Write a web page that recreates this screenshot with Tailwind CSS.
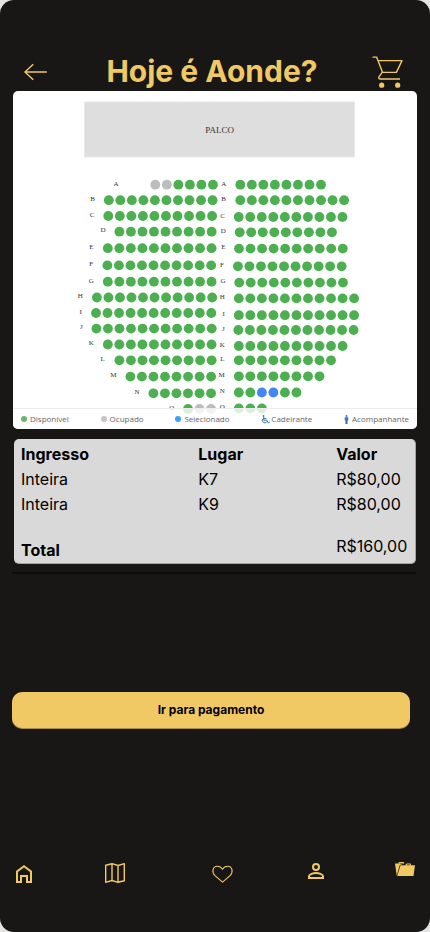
<!DOCTYPE html>
<html lang="pt-BR">
<head>
<meta charset="utf-8">
<meta name="viewport" content="width=device-width, initial-scale=1">
<title>Hoje é Aonde?</title>
<script src="https://cdn.jsdelivr.net/npm/@tailwindcss/browser@4"></script>
</head>
<body class="bg-[#e4e4e4] font-['Inter',sans-serif]">
<div class="flex min-h-screen flex-col rounded-[14px] bg-[#181715] text-[#f0c964]">

  <header class="flex items-center justify-between pt-[52px] pr-[26px] pl-6">
    <a href="#" aria-label="Voltar" class="block w-7">
      <svg class="h-[18px] w-6" viewBox="0 0 24 18" fill="none" stroke="currentColor" stroke-width="1.4"><path d="M22.8 9H1M9.2 1.2 1 9l8.2 7.8"/></svg>
    </a>
    <h1 class="text-[30px] leading-[39px] font-bold">Hoje é Aonde?</h1>
    <a href="#" aria-label="Carrinho" class="block">
      <svg class="h-8 w-8" viewBox="0 0 32 32" fill="none" stroke="currentColor" stroke-width="1.4" stroke-linejoin="round"><path d="M.5 1.1h4.1L10.6 16.4M5.8 4.6h24.2l-5.6 11.8H10.2l-3.3 4.4q-.6 2 1.3 2.2H28"/><g fill="currentColor" stroke="none"><circle cx="9.7" cy="29.2" r="2.6"/><circle cx="25.7" cy="29.2" r="2.6"/></g></svg>
    </a>
  </header>

  <main>
    <section aria-label="Mapa de assentos" class="relative mx-[13px] overflow-hidden rounded-[5px] bg-white">
      <svg id="seats" class="block w-full" viewBox="13 91 404 338" font-family="'Liberation Serif',serif" fill="#333" text-anchor="middle">
        <rect x="84.5" y="102" width="270" height="55" fill="#dedede" stroke="#e8e8e8"/>
        <text x="219.7" y="133" font-size="9">PALCO</text>
      </svg>
      <ul class="absolute inset-x-0 bottom-0 flex h-[21px] items-center justify-between border-t border-[#ededed] bg-white/80 pr-2 pl-2 font-['Open_Sans',sans-serif] text-[8px] leading-[16px] text-[#666]">
        <li class="flex items-center gap-[3px]"><span class="size-[6px] rounded-full bg-[#69b96c]"></span>Disponível</li>
        <li class="flex items-center gap-[3px]"><span class="size-[6px] rounded-full bg-[#c6c6c6]"></span>Ocupado</li>
        <li class="flex items-center gap-[3px]"><span class="size-[6px] rounded-full bg-[#35a2fb]"></span>Selecionado</li>
        <li class="flex items-center gap-px"><svg class="h-[9px] w-[9px]" viewBox="0 0 9 9" fill="none" stroke="#3d76b5"><circle cx="2.6" cy="1" r=".9" fill="#3d76b5" stroke="none"/><path d="M2.7 2v3.2h3.1l1.5 2.7 1.3-.5M2.8 3.5h2.6M1.8 3.9A2.4 2.4 0 1 0 5.8 6.8"/></svg>Cadeirante</li>
        <li class="flex items-center gap-[3px]"><svg class="h-[9px] w-[5px]" viewBox="0 0 5 9" fill="#3d76b5"><circle cx="2.5" cy="1" r="1"/><path d="M.7 2.2h3.6v3.2h-.7V9H1.4V5.4H.7z"/></svg>Acompanhante</li>
      </ul>
    </section>

    <section aria-label="Resumo" class="mx-[14px] mt-[10px] rounded-[5px] border-r border-b border-[#a3a3a3] bg-[#d9d9d9] pt-[3px] pl-[7px]">
      <table class="w-full table-fixed text-left text-[16px] leading-[25px] text-black">
        <colgroup><col class="w-[45%]"><col class="w-[35%]"><col class="w-[20%]"></colgroup>
        <thead><tr><th class="font-bold">Ingresso</th><th class="font-bold">Lugar</th><th class="font-bold">Valor</th></tr></thead>
        <tbody>
          <tr><td>Inteira</td><td>K7</td><td>R$80,00</td></tr>
          <tr><td>Inteira</td><td>K9</td><td>R$80,00</td></tr>
        </tbody>
        <tfoot><tr><th class="pt-[21px] align-top font-bold" colspan="2">Total</th><td class="pt-[17px] align-top">R$160,00</td></tr></tfoot>
      </table>
    </section>
    <hr class="mr-[14px] ml-3 mt-2 border-t-2 border-[#0d0c0b]">

    <div class="mt-[118px] mr-5 ml-3">
      <button type="button" class="block h-9 w-full rounded-[10px] bg-[#f0c964] pr-0 text-[12px] font-bold text-black shadow-[0_1px_0_#a98e49]">Ir para pagamento</button>
    </div>
  </main>

  <nav aria-label="Principal" class="mt-auto grid h-[27px] grid-cols-[91fr_107fr_94fr_89fr_24px] pr-[13px] pl-3 mb-[46px]">
    <a href="#" aria-label="Início" class="self-end"><svg class="size-6" viewBox="0 0 24 24" fill="none" stroke="currentColor" stroke-width="2"><path d="M5 20V9.5L12 4.2l7 5.3V20h-4v-6H9v6z"/></svg></a>
    <a href="#" aria-label="Mapa" class="self-center"><svg class="size-6" viewBox="0 0 24 24" fill="none" stroke="currentColor" stroke-width="1.4" stroke-linejoin="round"><path d="M2.7 4.2 9 2.7l6 1.8 6.3-1.8v17L15 21.3l-6-1.8-6.3 1.8zM9 2.7v16.8M15 4.5v16.8"/></svg></a>
    <a href="#" aria-label="Favoritos" class="self-end"><svg class="size-6" viewBox="0 0 24 24" fill="none" stroke="currentColor" stroke-width="1.1" stroke-linejoin="round"><path d="M12.5 20.2 5.2 13.8C1.3 10.2 2.6 4.2 7.3 4.2c2.6 0 4.2 1.3 5.2 3.1 1-1.8 2.6-3.1 5.2-3.1 4.7 0 6 6 2.1 9.6z"/></svg></a>
    <a href="#" aria-label="Perfil" class="self-start"><svg class="size-6" viewBox="0 0 24 24" fill="none" stroke="currentColor" stroke-width="2"><circle cx="12" cy="8" r="3"/><path d="M5 19v-1.8c0-1.8 4.3-3.2 7-3.2s7 1.4 7 3.2V19z"/></svg></a>
    <a href="#" aria-label="Pasta" class="self-start"><svg class="size-6" viewBox="0 0 24 24" fill="currentColor"><path d="M2 4.5h3.5V4q.2-1 1.2-1h3.5q1 0 1 1v.5L6.8 6 3.7 16.7zM6.5 4.5h3.7V4H6.7zM7.5 6.3h4.8l.6-1.2q.3-.6 1-.6h3.3q.8 0 .8.8v1h4L20.5 17H4.2zM13.5 6.3h3.7v-.8h-3.2z" fill-rule="evenodd"/></svg></a>
  </nav>
</div>

<script>
// One entry per half row: label, label x, label y, first seat x, seat y, seats
// (g = disponível, o = ocupado, s = selecionado)
const rows = [
  ['A',116,183.5,155.3,184.7,'oogggg'],
  ['B',92.5,198.5,108.8,200.2,'gggggggggg'],
  ['C',92,214.5,108.3,216,'gggggggggg'],
  ['D',103,230,119.4,231.7,'ggggggggg'],
  ['E',91.5,246.7,107.8,248.2,'gggggggggg'],
  ['F',91.3,264,107.4,265.4,'gggggggggg'],
  ['G',91.3,280.3,107.8,281.7,'gggggggggg'],
  ['H',80.3,295.5,96.9,297.5,'ggggggggggg'],
  ['I',80.7,311.3,96,313,'ggggggggggg'],
  ['J',81.3,327,96.4,328.6,'ggggggggggg'],
  ['K',91.3,343,107.8,344.5,'gggggggggg'],
  ['L',102.7,358.7,119.4,360.3,'ggggggggg'],
  ['M',113.3,375,130.4,376.6,'gggggggg'],
  ['N',137,391.7,153.4,393.3,'gggggg'],
  ['O',171.7,407.5,188,409,'goo'],
  ['A',223.7,183.3,240.3,184.7,'gggggggg'],
  ['B',223.7,198.7,240.3,200.2,'gggggggggg'],
  ['C',222.7,215.3,238.7,217,'gggggggggg'],
  ['D',223.3,230.7,239.7,232.3,'ggggggggg'],
  ['E',223.3,247,239,248.6,'gggggggggg'],
  ['F',222,264.7,237.9,266.3,'gggggggggg'],
  ['G',223,281,239.2,282.6,'gggggggggg'],
  ['H',222.3,296.8,238.8,298.4,'ggggggggggg'],
  ['I',223.7,313.7,238.8,315.2,'ggggggggggg'],
  ['J',223.3,328.5,238.3,330,'ggggggggggg'],
  ['K',222.3,344.5,238.8,346,'gggggggggg'],
  ['L',222.3,358.7,238.8,360.3,'ggggggggg'],
  ['M',221.7,374.8,238.8,376.3,'gggggggg'],
  ['N',222.3,391,238.8,392.5,'ggssgg'],
  ['O',222.3,407,238.8,408.4,'ggg']
];
const fills = { g: '#4caf50', o: '#bdbdbd', s: '#4285f4' };
const map = document.getElementById('seats');
const add = (name, attrs, text) => {
  const el = document.createElementNS('http://www.w3.org/2000/svg', name);
  for (const key in attrs) el.setAttribute(key, attrs[key]);
  if (text) el.textContent = text;
  map.appendChild(el);
};
for (const [label, lx, ly, x, y, seats] of rows) {
  add('text', { x: lx, y: ly + 2.4, 'font-size': 7 }, label);
  [...seats].forEach((s, i) => add('circle', { cx: x + i * 11.53, cy: y, r: 4.9, fill: fills[s] }));
}
</script>
</body>
</html>
